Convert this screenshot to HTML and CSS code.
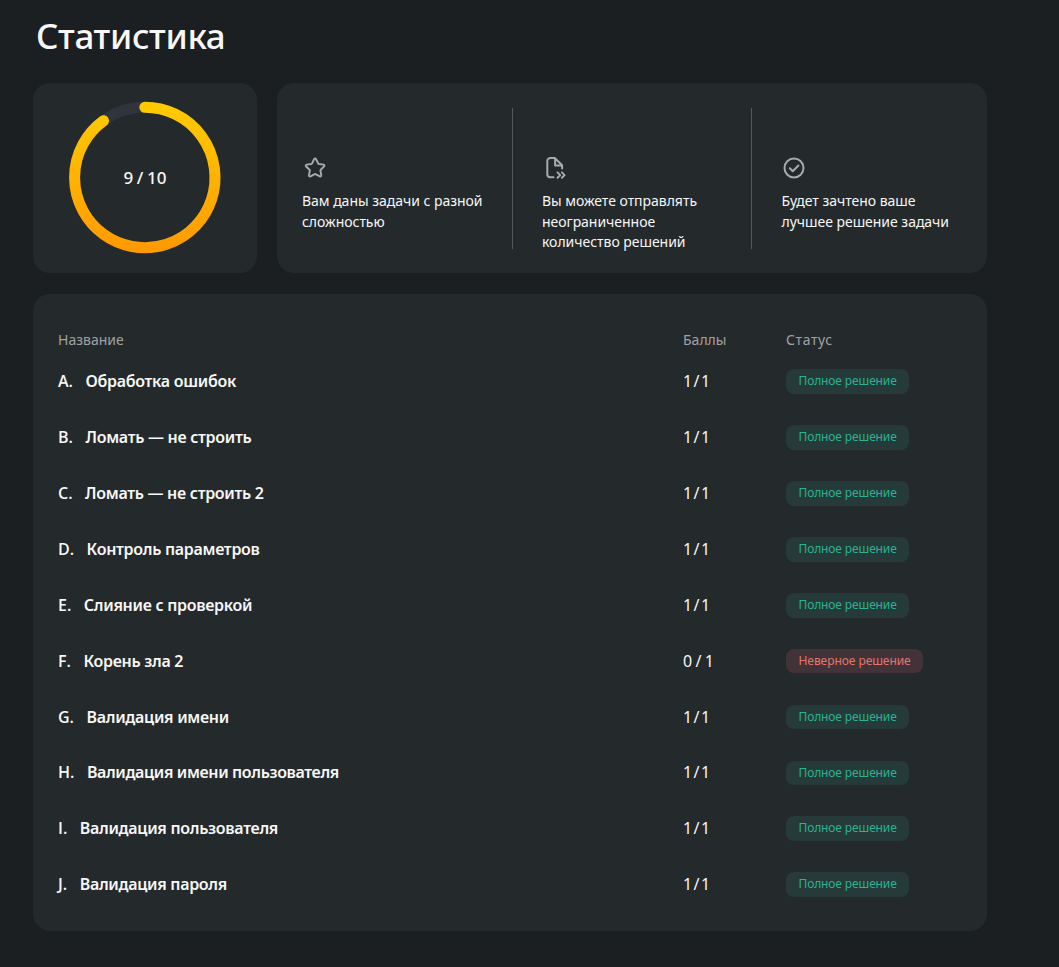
FILE: index.html
```html
<!DOCTYPE html>
<html lang="ru">
<head>
<meta charset="utf-8">
<title>Статистика</title>
<link rel="stylesheet" href="styles.css">
</head>
<body>
<main class="page">
  <h1 class="title">Статистика</h1>
  <section class="summary">
    <div class="card progress">
      <svg class="ring" viewBox="0 0 152 152">
        <defs>
          <linearGradient id="gold" gradientUnits="userSpaceOnUse" x1="0" y1="0" x2="0" y2="152">
            <stop offset="0" stop-color="#ffcc00"/>
            <stop offset="1" stop-color="#ff9900"/>
          </linearGradient>
        </defs>
        <circle class="ring-track" cx="75.8" cy="75.5" r="70.2"/>
        <path class="ring-value" d="M75.8 5.3A70.2 70.2 0 1 1 34.54 18.71"/>
      </svg>
      <span class="progress-label">9 / 10</span>
    </div>
    <div class="card rules">
      <div class="rule">
        <svg class="icon star" viewBox="0 0 24 24"><path d="M12.1 2.6c.5 0 .8.3 1 .7l2.2 4.5c.1.3.4.4.7.5l4.900.7c1 .2 1.300 1.200.6 1.900l-3.500 3.500c-.2.2-.3.5-.3.800l.8 4.800c.2 1-.7 1.600-1.500 1.200l-4.400-2.300c-.3-.2-.6-.2-.9 0L7.300 21.200c-.9.4-1.800-.2-1.600-1.200l.9-4.800c0-.3-.1-.6-.3-.8L2.700 10.900c-.7-.7-.3-1.700.6-1.900l4.900-.7c.3 0 .6-.2.7-.5l2.200-4.500c.2-.4.5-.7 1-.7Z"/></svg>
        <p class="rule-text">Вам даны задачи с разной<br>сложностью</p>
      </div>
      <div class="rule">
        <svg class="icon" viewBox="0 0 24 24"><path d="M10.500 21.300H7.300a3 3 0 0 1-3-3V5a3 3 0 0 1 3-3h4.500l7.300 7.300v3.300M12.100 2.300v7.200h6.700"/><path d="m14.500 16.400 2.700 2.700-2.700 2.700M18.900 16.400l2.700 2.700-2.700 2.700"/></svg>
        <p class="rule-text">Вы можете отправлять<br>неограниченное<br>количество решений</p>
      </div>
      <div class="rule">
        <svg class="icon" viewBox="0 0 24 24"><circle cx="12" cy="12" r="9.500"/><path d="m7.800 12.200 3 3 5.600-5.700"/></svg>
        <p class="rule-text">Будет зачтено ваше<br>лучшее решение задачи</p>
      </div>
    </div>
  </section>
  <section class="card tasks">
    <div class="head"><span>Название</span><span>Баллы</span><span class="head-status">Статус</span></div>
    <div class="rows">
      <div class="row"><div class="name"><span class="letter">A.</span><span>Обработка ошибок</span></div><span class="score">1 / 1</span><span class="badge ok">Полное решение</span></div>
      <div class="row"><div class="name"><span class="letter">B.</span><span>Ломать — не строить</span></div><span class="score">1 / 1</span><span class="badge ok">Полное решение</span></div>
      <div class="row"><div class="name"><span class="letter">C.</span><span>Ломать — не строить 2</span></div><span class="score">1 / 1</span><span class="badge ok">Полное решение</span></div>
      <div class="row"><div class="name"><span class="letter">D.</span><span>Контроль параметров</span></div><span class="score">1 / 1</span><span class="badge ok">Полное решение</span></div>
      <div class="row"><div class="name"><span class="letter">E.</span><span>Слияние с проверкой</span></div><span class="score">1 / 1</span><span class="badge ok">Полное решение</span></div>
      <div class="row"><div class="name"><span class="letter">F.</span><span>Корень зла 2</span></div><span class="score zero">0 / 1</span><span class="badge fail">Неверное решение</span></div>
      <div class="row"><div class="name"><span class="letter">G.</span><span>Валидация имени</span></div><span class="score">1 / 1</span><span class="badge ok">Полное решение</span></div>
      <div class="row"><div class="name long"><span class="letter">H.</span><span>Валидация имени пользователя</span></div><span class="score">1 / 1</span><span class="badge ok">Полное решение</span></div>
      <div class="row"><div class="name"><span class="letter">I.</span><span>Валидация пользователя</span></div><span class="score">1 / 1</span><span class="badge ok">Полное решение</span></div>
      <div class="row"><div class="name"><span class="letter">J.</span><span>Валидация пароля</span></div><span class="score">1 / 1</span><span class="badge ok">Полное решение</span></div>
    </div>
  </section>
</main>
</body>
</html>
```
FILE: styles.css
```css
* { box-sizing: border-box; }
body {
  margin: 0;
  min-height: 967px;
  background: #1c1f21;
  color: #f7f7f7;
  font-family: "Noto Sans", "Open Sans", sans-serif;
  overflow: hidden;
}
.page { width: 954px; margin-left: 33px; }
.title {
  margin: 0 0 0 3px;
  height: 83px;
  padding-top: 12px;
  font-size: 35px;
  line-height: 48px;
  font-weight: 550;
  letter-spacing: -0.35px;
}
.card { background: #24292c; border-radius: 17px; }
.summary { display: flex; gap: 20px; margin-bottom: 21px; }
.progress { width: 224px; height: 190px; display: grid; place-items: center; }
.ring { grid-area: 1 / 1; width: 152px; height: 152px; overflow: visible; }
.ring-track { fill: none; stroke: #2f343d; stroke-width: 11; }
.ring-value { fill: none; stroke: url(#gold); stroke-width: 11; stroke-linecap: round; }
.progress-label {
  grid-area: 1 / 1;
  font-size: 17px;
  font-weight: 500;
  line-height: 24px;
  word-spacing: -0.9px;
}
.rules {
  width: 710px;
  height: 190px;
  padding-top: 25px;
  display: grid;
  grid-template-columns: 235px 239px 1fr;
  grid-template-rows: 141px;
}
.rule { padding: 48px 0 0 29px; }
.rule:first-child { padding-left: 25px; }
.rule + .rule { border-left: 1px solid #56595c; }
.icon {
  display: block;
  width: 24px;
  height: 24px;
  margin-left: 1px;
  fill: none;
  stroke: #a8aaab;
  stroke-width: 2;
  stroke-linecap: round;
  stroke-linejoin: round;
}
.star { margin-left: 0.5px; padding: 0 0.5px 1px; }
.rule-text {
  margin: 11px 0 0;
  font-size: 14px;
  line-height: 20.5px;
  letter-spacing: -0.03px;
  white-space: nowrap;
}
.rule:last-child .rule-text { padding-left: 0.5px; }
.tasks { height: 637px; padding: 34px 25px 0; }
.head, .row { display: grid; grid-template-columns: 625px 103px 1fr; align-items: center; }
.head { height: 22px; font-size: 14px; color: #a0a2a4; }
.head-status { letter-spacing: 0.6px; }
.rows { padding-top: 3.4px; }
.row { height: 55.88px; font-size: 16px; }
.name {
  display: flex;
  gap: 12.5px;
  font-weight: 600;
  letter-spacing: -0.3px;
  white-space: nowrap;
}
.long { letter-spacing: -0.37px; }
.letter { font-family: "Open Sans", "Noto Sans", sans-serif; letter-spacing: 0; }
.score { letter-spacing: -0.8px; word-spacing: -1.1px; }
.zero { letter-spacing: -0.2px; word-spacing: -0.4px; }
.badge {
  justify-self: start;
  height: 24.6px;
  margin-top: 0.8px;
  padding: 0 12.5px;
  border-radius: 8px;
  font-size: 12px;
  line-height: 24.6px;
  letter-spacing: -0.12px;
  white-space: nowrap;
}
.ok { background: #253a39; color: #2bb491; }
.fail { background: #413337; color: #e5766f; letter-spacing: -0.06px; }
```
